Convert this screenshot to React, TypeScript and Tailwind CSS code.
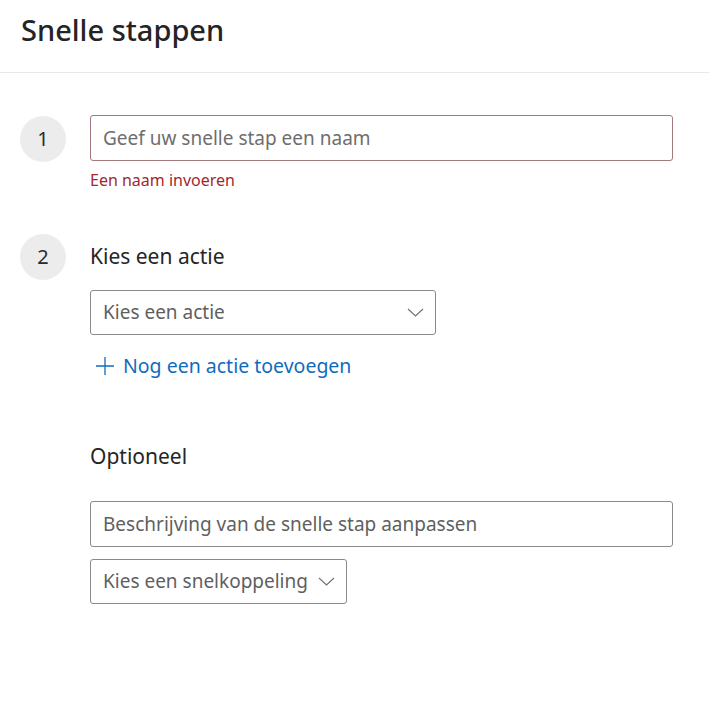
import React from "react";

const Chevron = () => (
	<svg width="17" height="9" viewBox="0 0 17 9" fill="none" className="shrink-0">
		<path d="M1 1l7.5 7 7.5-7" stroke="#707070" strokeWidth="1.1" />
	</svg>
);

const StepBadge = ({ n }: { n: number }) => (
	<div className="flex h-[46px] w-[46px] shrink-0 items-center justify-center rounded-full bg-[#ececec] text-[20px] text-[#2b2b2b]">
		{n}
	</div>
);

export default function App() {
	return (
		<div className="min-h-[704px] w-full bg-white font-['Noto_Sans',sans-serif] text-[#252525]">
			<div className="h-[73px] border-b border-[#e8e8e8] px-[21px] pt-[9px]">
				<h1 className="text-[29px] font-medium leading-[42px] text-[#242424]">Snelle stappen</h1>
			</div>

			<div className="flex flex-col px-5 pt-[42px]">
				<div className="flex gap-6">
					<div className="pt-[1px]">
						<StepBadge n={1} />
					</div>
					<div className="flex flex-1 flex-col pr-[16px]">
						<div className="flex h-[46px] items-center rounded-[3px] border border-[#a4787d] px-3 text-[19px] text-[#6e6e6e]">
							Geef uw snelle stap een naam
						</div>
						<div className="mt-[7px] text-[16px] text-[#a4262c]">Een naam invoeren</div>
					</div>
				</div>

				<div className="mt-[42px] flex gap-6">
					<StepBadge n={2} />
					<div className="flex flex-1 flex-col">
						<div className="flex h-[46px] items-center text-[21px] text-[#252525]">Kies een actie</div>
						<div className="mt-[10px] flex h-[45px] w-[346px] items-center justify-between rounded-[3px] border border-[#8a8a8a] pl-3 pr-[11px] text-[19px] text-[#5f5f5f]">
							<span>Kies een actie</span>
							<Chevron />
						</div>
						<div className="mt-[16px] flex items-center gap-[8px] pl-[5px] text-[19.5px] text-[#0f6cbd]">
							<svg width="20" height="20" viewBox="0 0 20 20" fill="none">
								<path d="M10 1v18M1 10h18" stroke="#0f6cbd" strokeWidth="1.3" />
							</svg>
							<span>Nog een actie toevoegen</span>
						</div>

						<div className="mt-[61px] text-[21px] text-[#252525]">Optioneel</div>
						<div className="mt-[28px] mr-[16px] flex h-[46px] items-center rounded-[3px] border border-[#8a8a8a] px-3 text-[19px] text-[#5f5f5f]">
							Beschrijving van de snelle stap aanpassen
						</div>
						<div className="mt-[12px] flex h-[45px] w-[257px] items-center justify-between rounded-[3px] border border-[#8a8a8a] pl-3 pr-[11px] text-[19px] text-[#5f5f5f]">
							<span>Kies een snelkoppeling</span>
							<Chevron />
						</div>
					</div>
				</div>
			</div>
		</div>
	);
}
